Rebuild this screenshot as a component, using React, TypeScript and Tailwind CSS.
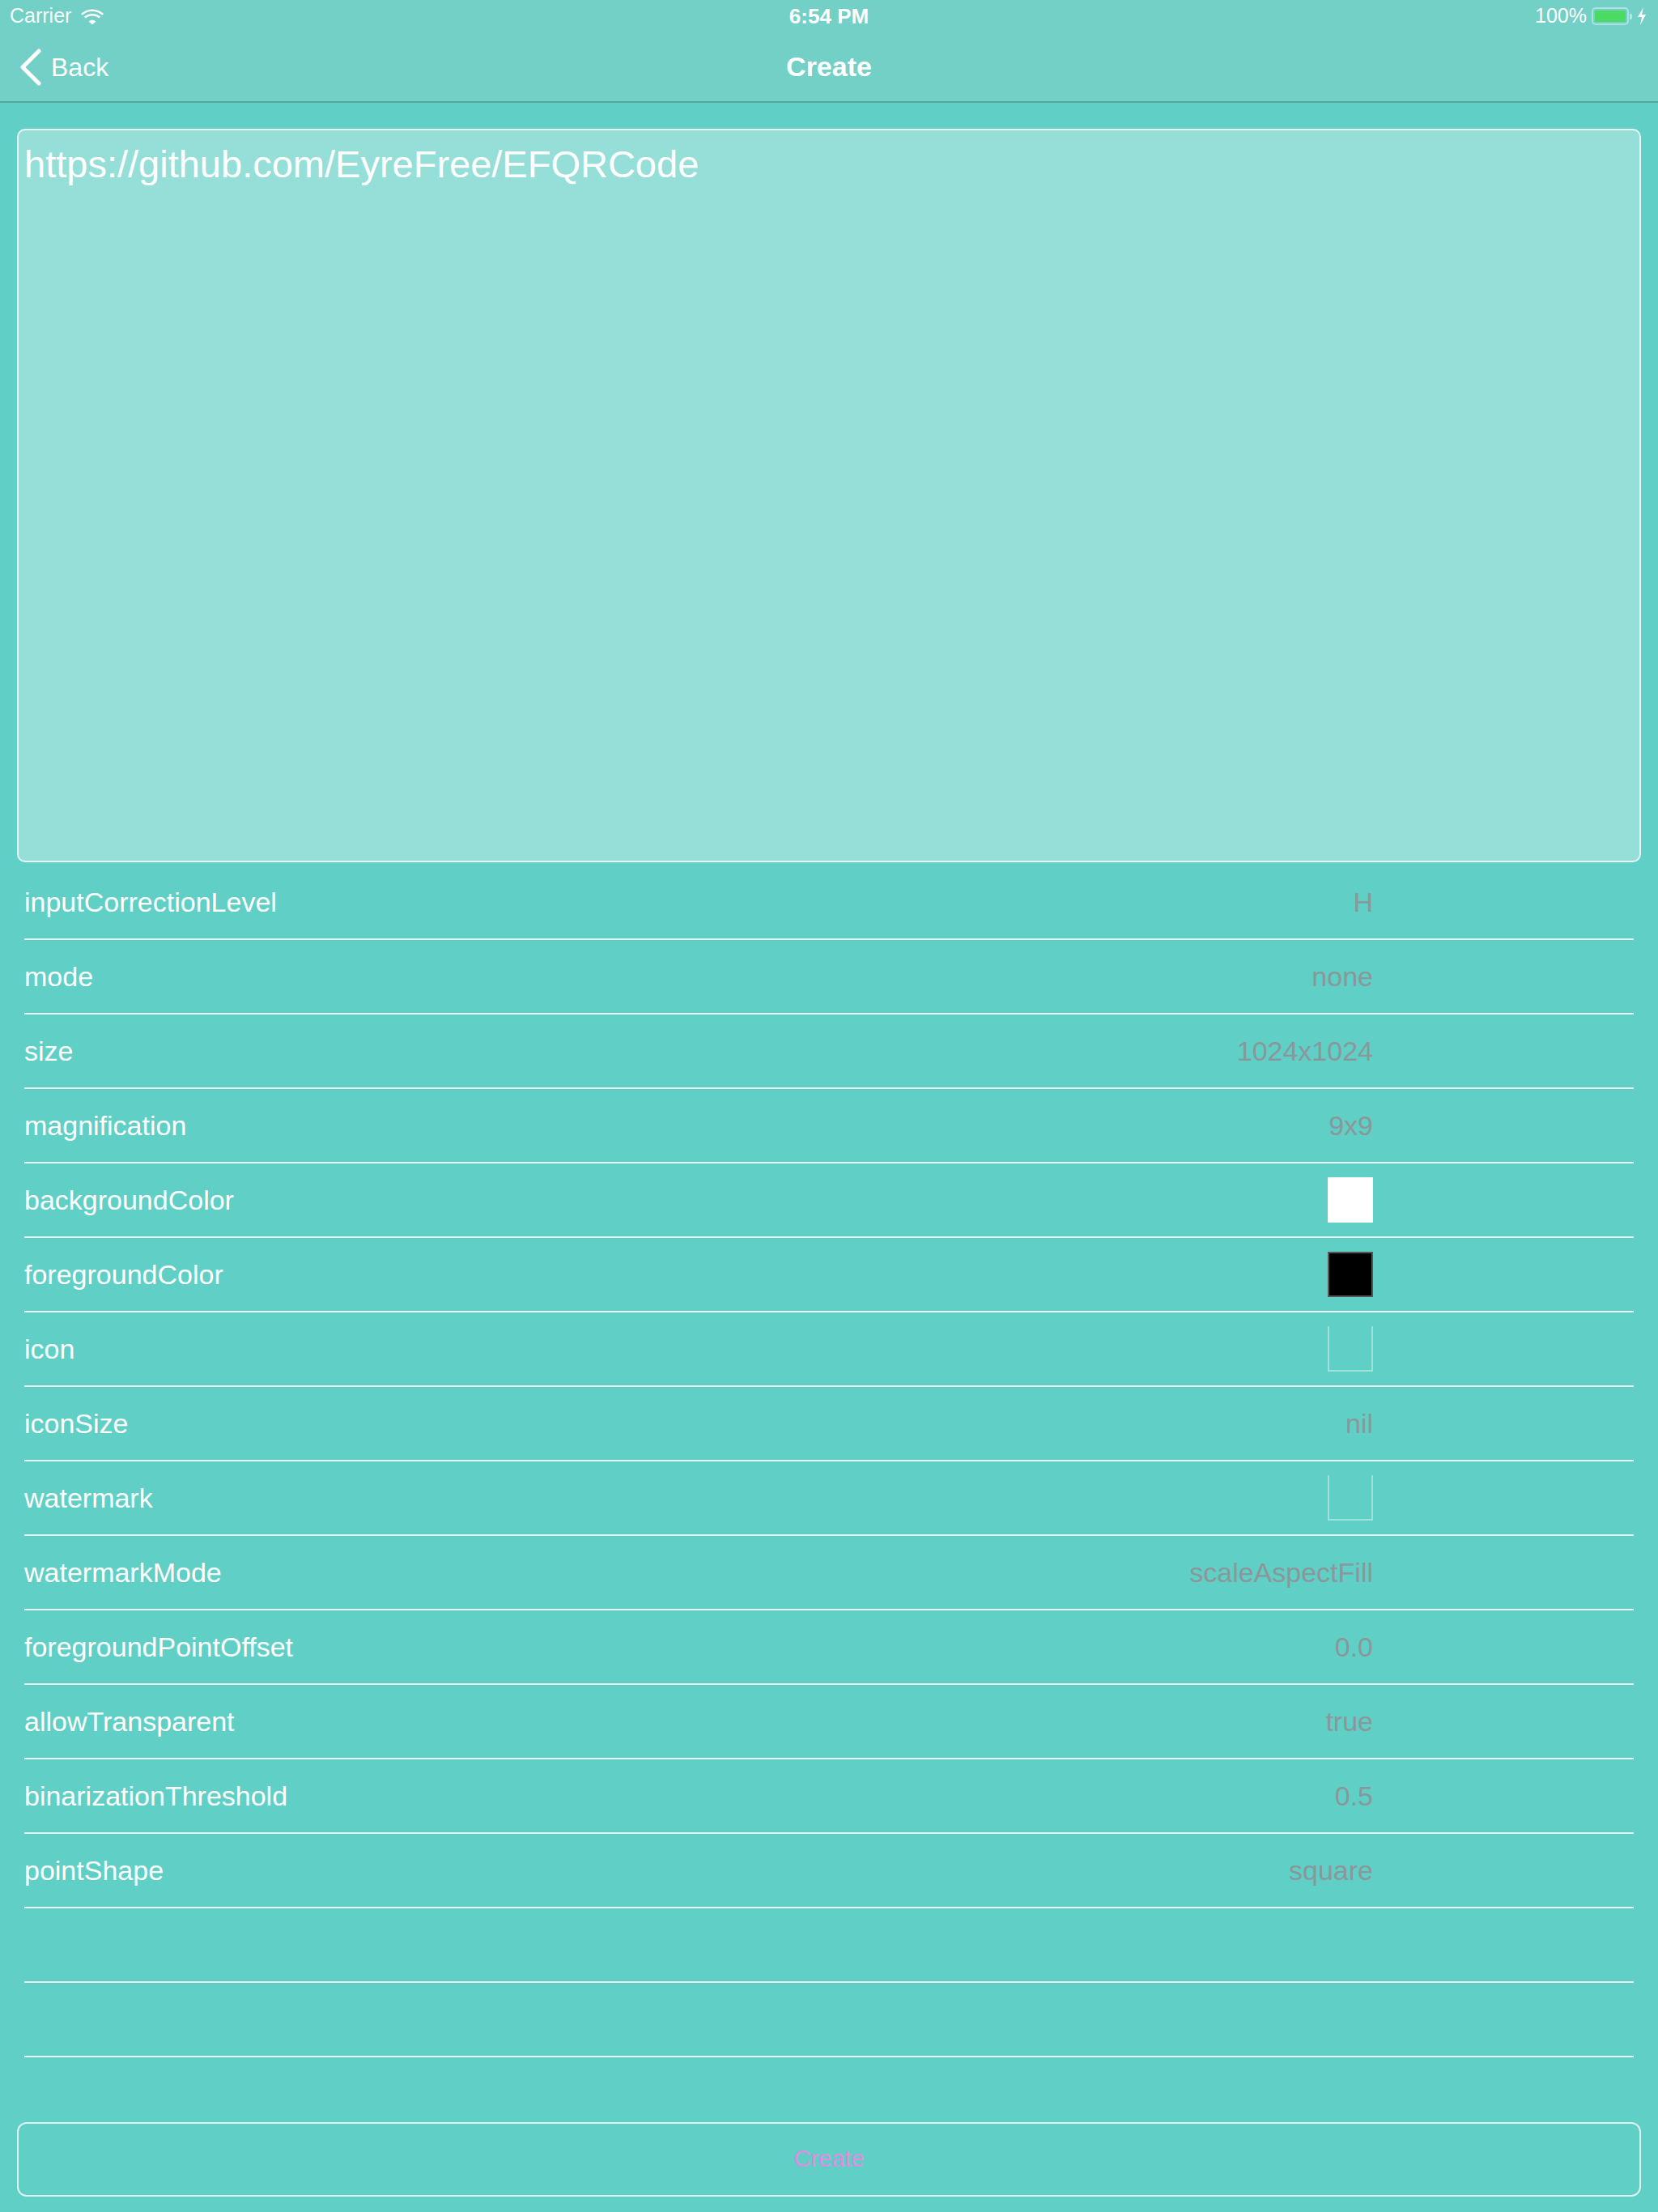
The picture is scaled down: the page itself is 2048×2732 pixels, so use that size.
const ROWS: { label: string; value?: string; swatch?: 'white' | 'black' | 'empty' }[] = [
  { label: 'inputCorrectionLevel', value: 'H' },
  { label: 'mode', value: 'none' },
  { label: 'size', value: '1024x1024' },
  { label: 'magnification', value: '9x9' },
  { label: 'backgroundColor', swatch: 'white' },
  { label: 'foregroundColor', swatch: 'black' },
  { label: 'icon', swatch: 'empty' },
  { label: 'iconSize', value: 'nil' },
  { label: 'watermark', swatch: 'empty' },
  { label: 'watermarkMode', value: 'scaleAspectFill' },
  { label: 'foregroundPointOffset', value: '0.0' },
  { label: 'allowTransparent', value: 'true' },
  { label: 'binarizationThreshold', value: '0.5' },
  { label: 'pointShape', value: 'square' },
  { label: '' },
  { label: '' },
]

function Swatch({ kind }: { kind: 'white' | 'black' | 'empty' }) {
  if (kind === 'white') return <div className="h-[56px] w-[56px] bg-white" />
  if (kind === 'black') return <div className="h-[56px] w-[56px] border-2 border-[#555] bg-black" />
  return <div className="h-[56px] w-[56px] border-x-2 border-b-2 border-white/40" />
}

function Wifi() {
  return (
    <svg width="28" height="20" viewBox="0 0 28 20" fill="white">
      <path d="M14 4C9.2 4 5 5.9 1.8 8.8L0 6.9C3.7 3.6 8.6 1.5 14 1.5s10.3 2.1 14 5.4l-1.8 1.9C23 5.9 18.8 4 14 4z" />
      <path d="M14 9.5c-3.1 0-6 1.2-8.2 3.1l-1.9-2c2.7-2.4 6.3-3.7 10.1-3.7s7.4 1.3 10.1 3.7l-1.9 2C20 10.7 17.1 9.5 14 9.5z" />
      <path d="M14 14.8c-1.7 0-3.2.6-4.4 1.6L14 20.5l4.4-4.1c-1.2-1-2.7-1.6-4.4-1.6z" />
    </svg>
  )
}

export default function App() {
  return (
    <div className="flex h-[2732px] w-[2048px] flex-col bg-[#60cfc5] font-['Liberation_Sans',Arial,sans-serif] text-white">
      {/* status + nav */}
      <header className="h-[127px] border-b-2 border-[#4fa9a1] bg-[#72d0c6]">
        <div className="relative flex h-[40px] items-center justify-between px-[12px] text-[25px]">
          <div className="flex items-center gap-[12px] text-white/95">
            <span>Carrier</span>
            <Wifi />
          </div>
          <span className="absolute left-1/2 -translate-x-1/2 text-[26px] font-semibold">6:54 PM</span>
          <div className="flex items-center gap-[6px] pr-[2px]">
            <span>100%</span>
            <div className="flex items-center">
              <div className="h-[22px] w-[46px] rounded-[5px] border-2 border-white/40 p-[2px]">
                <div className="h-full w-full rounded-[2px] bg-[#4cd964]" />
              </div>
              <div className="ml-[1px] h-[7px] w-[3px] rounded-r-[2px] bg-white/50" />
            </div>
            <svg width="12" height="22" viewBox="0 0 12 22" fill="white">
              <path d="M8 0 L1 12 H6 L4 22 L11 9 H6 Z" />
            </svg>
          </div>
        </div>
        <div className="relative flex h-[85px] items-center">
          <div className="flex items-center pl-[24px]">
            <svg width="28" height="46" viewBox="0 0 28 46" fill="none" stroke="white" strokeWidth="5" strokeLinecap="round" strokeLinejoin="round">
              <path d="M24 3 L4 23 L24 43" />
            </svg>
            <span className="ml-[11px] text-[32px]">Back</span>
          </div>
          <span className="absolute left-1/2 -translate-x-1/2 text-[34px] font-bold">Create</span>
        </div>
      </header>

      {/* text area */}
      <div className="mx-[21px] mt-[32px] h-[906px] rounded-[10px] border-2 border-white/75 bg-[#95dfd8] px-[7px] pt-[12px] text-[47px] leading-[60px]">
        https://github.com/EyreFree/EFQRCode
      </div>

      {/* settings list */}
      <ul className="mx-[30px] mt-[4px]">
        {ROWS.map((row, i) => (
          <li
            key={i}
            className="flex h-[92px] items-center justify-between border-b-2 border-white/85 pr-[322px] text-[34px]"
          >
            <span>{row.label}</span>
            {row.swatch ? (
              <Swatch kind={row.swatch} />
            ) : (
              <span className="text-[#8b979b]">{row.value}</span>
            )}
          </li>
        ))}
      </ul>

      <button className="mx-[21px] mt-[80px] h-[92px] rounded-[12px] border-2 border-white/80 text-[29px] text-[#e08ce0]">
        Create
      </button>
    </div>
  )
}
